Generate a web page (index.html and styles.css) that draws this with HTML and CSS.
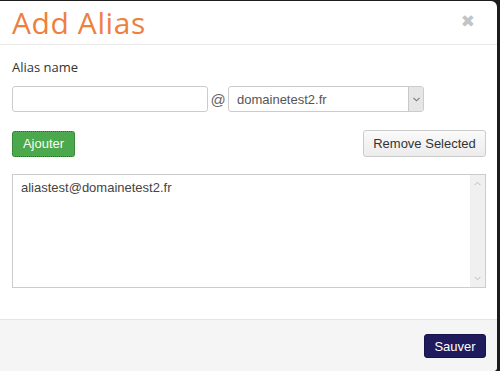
FILE: index.html
```html
<!DOCTYPE html>
<html>
<head>
<meta charset="utf-8">
<link rel="stylesheet" href="styles.css">
</head>
<body>
<div class="modal">
  <div class="modal-header">
    <h1 class="title">Add Alias</h1>
    <span class="close">&#x2716;</span>
  </div>
  <div class="modal-body">
    <div class="label">Alias name</div>
    <div class="alias-row">
      <div class="input"></div>
      <span class="at">@</span>
      <div class="select">
        <span class="select-text">domainetest2.fr</span>
        <span class="select-btn">
          <svg width="7" height="5" viewBox="0 0 7 5"><path d="M0.5 0.8 L3.5 3.8 L6.5 0.8" fill="none" stroke="#777" stroke-width="1.1"/></svg>
        </span>
      </div>
    </div>
    <div class="btn-row">
      <button class="btn btn-green">Ajouter</button>
      <button class="btn btn-default">Remove Selected</button>
    </div>
    <div class="list">
      <div class="list-content">aliastest@domainetest2.fr</div>
      <div class="scrollbar">
        <svg width="7" height="5" viewBox="0 0 7 5"><path d="M0.5 4.2 L3.5 1.2 L6.5 4.2" fill="none" stroke="#bbb" stroke-width="1"/></svg>
        <svg width="7" height="5" viewBox="0 0 7 5"><path d="M0.5 0.8 L3.5 3.8 L6.5 0.8" fill="none" stroke="#bbb" stroke-width="1"/></svg>
      </div>
    </div>
  </div>
  <div class="modal-footer">
    <button class="btn btn-navy">Sauver</button>
  </div>
</div>
</body>
</html>
```

FILE: styles.css
```css
* {
  box-sizing: border-box;
}
html, body {
  margin: 0;
  padding: 0;
  background: #1c1c1c;
}
body {
  padding-top: 1px;
  height: 371px;
  overflow: hidden;
}
.modal {
  width: 497px;
  height: 370px;
  background: #fff;
  border-top-right-radius: 6px;
  border-bottom-right-radius: 4px;
  overflow: hidden;
  display: flex;
  flex-direction: column;
}
.modal-header {
  height: 44px;
  flex: none;
  border-bottom: 1px solid #e8e8e8;
  display: flex;
  align-items: center;
  justify-content: space-between;
  padding: 0 22px 0 12px;
}
.title {
  margin: 0;
  font-family: "Open Sans", sans-serif;
  font-weight: 400;
  font-size: 30px;
  color: #ef7f3f;
  letter-spacing: 0.6px;
  line-height: 1;
}
.close {
  color: #c4c4c4;
  font-family: "DejaVu Sans", sans-serif;
  font-size: 17px;
  font-weight: bold;
  margin-top: -4px;
}
.modal-body {
  padding: 12px 11px 0 12px;
  flex: 1;
}
.label {
  font-family: "Open Sans", sans-serif;
  font-size: 13px;
  color: #333;
  line-height: 20px;
  margin-bottom: 9px;
}
.alias-row {
  display: flex;
  align-items: center;
}
.input {
  width: 196px;
  height: 26px;
  border: 1px solid #ccc;
  border-radius: 3px;
  background: #fff;
}
.at {
  width: 20px;
  text-align: center;
  font-family: "Liberation Sans", Arial, sans-serif;
  font-size: 15px;
  color: #666;
}
.select {
  width: 196px;
  height: 26px;
  border: 1px solid #ccc;
  border-radius: 3px;
  display: flex;
  align-items: center;
  justify-content: space-between;
  overflow: hidden;
}
.select-text {
  padding-left: 8px;
  font-family: "Liberation Sans", Arial, sans-serif;
  font-size: 13px;
  color: #555;
}
.select-btn {
  width: 15px;
  height: 24px;
  background: #e6e6e6;
  border-left: 1px solid #c8c8c8;
  display: flex;
  align-items: center;
  justify-content: center;
}
.btn-row {
  display: flex;
  justify-content: space-between;
  align-items: center;
  margin-top: 18px;
}
.btn {
  font-family: "Liberation Sans", Arial, sans-serif;
  font-size: 13px;
  border-radius: 3px;
  padding: 0;
  cursor: pointer;
}
.btn-green {
  height: 26px;
  width: 63px;
  background: #4ca84c;
  color: #f4fff4;
  border: 1px dotted #2d6b2d;
}
.btn-default {
  height: 27px;
  width: 123px;
  background: linear-gradient(#fafafa, #ececec);
  border: 1px solid #ccc;
  color: #333;
}
.list {
  margin-top: 17px;
  height: 114px;
  border: 1px solid #ccc;
  display: flex;
}
.list-content {
  flex: 1;
  padding: 5px 8px;
  font-family: "Liberation Sans", Arial, sans-serif;
  font-size: 13px;
  color: #444;
}
.scrollbar {
  width: 15px;
  background: #f0f0f0;
  display: flex;
  flex-direction: column;
  justify-content: space-between;
  align-items: center;
  padding: 6px 0;
}
.modal-footer {
  height: 52px;
  flex: none;
  border-top: 1px solid #e5e5e5;
  background: #f5f5f5;
  display: flex;
  justify-content: flex-end;
  align-items: flex-start;
  padding: 14px 11px 0 0;
}
.btn-navy {
  height: 24px;
  width: 62px;
  background: #1f1b5c;
  color: #fff;
  border: 1px solid #17144a;
  font-size: 13px;
}
```
